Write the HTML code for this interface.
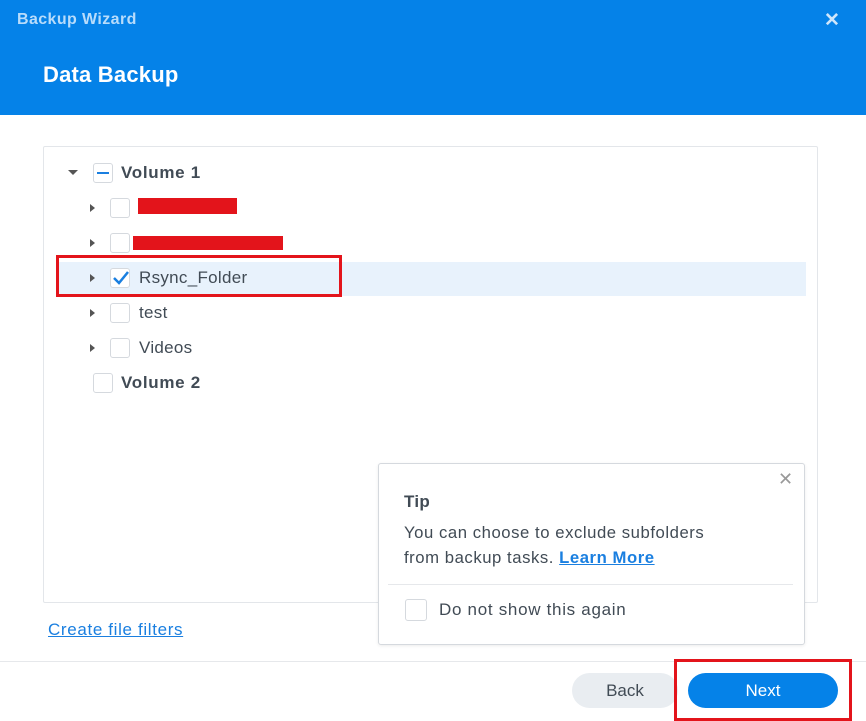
<!DOCTYPE html><html><head><style>
body{margin:0;width:866px;height:721px;background:#fff;font-family:"Liberation Sans",sans-serif;position:relative;overflow:hidden;color:#414b55}
.a{position:absolute}
.cb{position:absolute;width:20px;height:20px;border:1px solid #d5d9de;border-radius:3px;background:#fff;box-sizing:border-box}
.tri{position:absolute;width:0;height:0;border-top:4px solid transparent;border-bottom:4px solid transparent;border-left:5px solid #555}
.t{position:absolute;font-size:17px;line-height:20px;letter-spacing:0.3px}
</style></head><body>
<div class="a" style="left:0;top:0;width:866px;height:115px;background:#0582e8"></div>
<div class="a" style="left:17px;top:11px;color:#b8dcfb;font-weight:bold;font-size:16px;letter-spacing:0.4px">Backup Wizard</div>
<div class="a" style="left:824px;top:9px;color:#cfe6fb;font-weight:bold;font-size:19px">✕</div>
<div class="a" style="left:43px;top:62px;color:#fff;font-weight:bold;font-size:22px;letter-spacing:0.2px">Data Backup</div>
<div class="a" style="left:43px;top:146px;width:775px;height:457px;border:1px solid #e3e6ea;box-sizing:border-box;border-radius:2px"></div>
<div class="a" style="left:56px;top:262px;width:750px;height:34px;background:#e8f2fc"></div>
<div class="a" style="left:68px;top:170px;border-left:5px solid transparent;border-right:5px solid transparent;border-top:5px solid #555"></div>
<div class="cb" style="left:93px;top:163px"></div><div class="a" style="left:97px;top:172px;width:12px;height:2px;background:#1a7fe0"></div>
<div class="t" style="left:121px;top:163px;font-weight:bold;letter-spacing:0.7px">Volume 1</div>
<div class="tri" style="left:90px;top:204px"></div><div class="cb" style="left:110px;top:198px"></div>
<div class="a" style="left:138px;top:198px;width:99px;height:16px;background:#e3141b"></div>
<div class="tri" style="left:90px;top:239px"></div><div class="cb" style="left:110px;top:233px"></div>
<div class="a" style="left:133px;top:236px;width:150px;height:14px;background:#e3141b"></div>
<div class="tri" style="left:90px;top:274px"></div><div class="cb" style="left:110px;top:268px"></div>
<svg class="a" style="left:112px;top:270px" width="18" height="16"><path d="M2 8l5 5 9-11" stroke="#1a7fe0" stroke-width="2.5" fill="none"/></svg>
<div class="t" style="left:139px;top:268px">Rsync_Folder</div>
<div class="a" style="left:56px;top:255px;width:286px;height:42px;border:3px solid #e3141b;box-sizing:border-box"></div>
<div class="tri" style="left:90px;top:309px"></div><div class="cb" style="left:110px;top:303px"></div><div class="t" style="left:139px;top:303px">test</div>
<div class="tri" style="left:90px;top:344px"></div><div class="cb" style="left:110px;top:338px"></div><div class="t" style="left:139px;top:338px">Videos</div>
<div class="cb" style="left:93px;top:373px"></div><div class="t" style="left:121px;top:373px;font-weight:bold;letter-spacing:0.7px">Volume 2</div>
<div class="a" style="left:48px;top:620px;font-size:17px;color:#1a7fe0;text-decoration:underline;letter-spacing:0.65px">Create file filters</div>
<div class="a" style="left:0;top:661px;width:866px;height:1px;background:#e6e8eb"></div>
<div class="a" style="left:378px;top:463px;width:427px;height:182px;border:1px solid #d5d9de;border-radius:3px;background:#fff;box-sizing:border-box;box-shadow:0 1px 3px rgba(0,0,0,.08)"></div>
<div class="a" style="left:778px;top:469px;color:#999;font-size:18px">✕</div>
<div class="t" style="left:404px;top:492px;font-weight:bold">Tip</div>
<div class="a" style="left:404px;top:520px;font-size:16.7px;line-height:25px;letter-spacing:0.55px">You can choose to exclude subfolders<br>from backup tasks. <b style="color:#1a7fe0;text-decoration:underline">Learn More</b></div>
<div class="a" style="left:388px;top:584px;width:405px;height:1px;background:#e6e8eb"></div>
<div class="cb" style="left:405px;top:599px;width:22px;height:22px"></div>
<div class="t" style="left:439px;top:600px;letter-spacing:0.7px">Do not show this again</div>
<div class="a" style="left:572px;top:673px;width:106px;height:35px;border-radius:18px;background:#e9edf1;text-align:center;line-height:35px;font-size:17px">Back</div>
<div class="a" style="left:688px;top:673px;width:150px;height:35px;border-radius:18px;background:#0582e8;color:#fff;text-align:center;line-height:35px;font-size:17px">Next</div>
<div class="a" style="left:674px;top:659px;width:178px;height:62px;border:3px solid #e3141b;box-sizing:border-box"></div>
</body></html>
